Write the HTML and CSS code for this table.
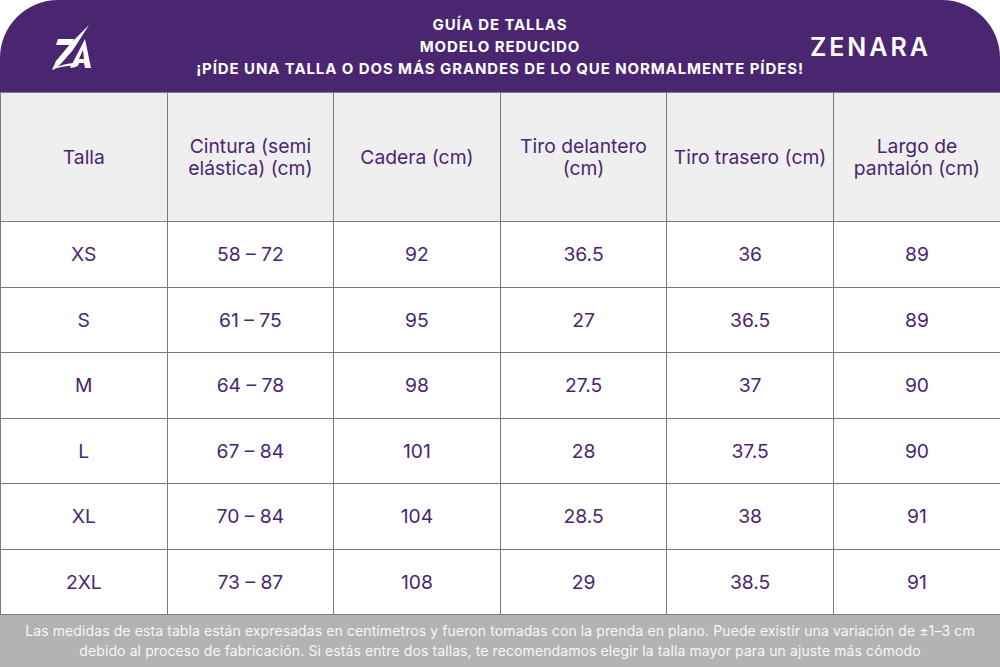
FILE: index.html
```html
<!DOCTYPE html>
<html lang="es">
<head>
<meta charset="utf-8">
<title>Guía de tallas - Zenara</title>
<link rel="stylesheet" href="styles.css">
</head>
<body>
<div class="page">
  <header class="top">
    <div class="logo">
      <svg width="44" height="48" viewBox="48 20 44 48" aria-label="ZA">
        <polygon fill="#fff" points="58,36 74,36 71,42 56,42"/>
        <polygon fill="#fff" points="89,22 73,47 58,64 52,67 56,58 71,40"/>
        <path fill="#fff" d="M52,67 Q64,59 79,60 L78,63 Q64,62 52,67 Z"/>
        <path fill="#fff" fill-rule="evenodd" d="M85,36 L91,65 L85,65 L84,60 L78,60 L76,64 L70,65 Z M83,47 L84,56 L79,56 Z"/>
      </svg>
    </div>
    <div class="title">
      <div>GUÍA DE TALLAS</div>
      <div>MODELO REDUCIDO</div>
      <div>¡PÍDE UNA TALLA O DOS MÁS GRANDES DE LO QUE NORMALMENTE PÍDES!</div>
    </div>
    <div class="brand">ZENARA</div>
  </header>
  <table class="sizes">
    <thead>
      <tr>
        <th>Talla</th>
        <th>Cintura (semi<br>elástica) (cm)</th>
        <th>Cadera (cm)</th>
        <th>Tiro delantero<br>(cm)</th>
        <th>Tiro trasero (cm)</th>
        <th>Largo de<br>pantalón (cm)</th>
      </tr>
    </thead>
    <tbody>
      <tr><td>XS</td><td>58 – 72</td><td>92</td><td>36.5</td><td>36</td><td>89</td></tr>
      <tr><td>S</td><td>61 – 75</td><td>95</td><td>27</td><td>36.5</td><td>89</td></tr>
      <tr><td>M</td><td>64 – 78</td><td>98</td><td>27.5</td><td>37</td><td>90</td></tr>
      <tr><td>L</td><td>67 – 84</td><td>101</td><td>28</td><td>37.5</td><td>90</td></tr>
      <tr><td>XL</td><td>70 – 84</td><td>104</td><td>28.5</td><td>38</td><td>91</td></tr>
      <tr><td>2XL</td><td>73 – 87</td><td>108</td><td>29</td><td>38.5</td><td>91</td></tr>
    </tbody>
  </table>
  <footer class="note">
    Las medidas de esta tabla están expresadas en centímetros y fueron tomadas con la prenda en plano. Puede existir una variación de ±1–3 cm<br>
    debido al proceso de fabricación. Si estás entre dos tallas, te recomendamos elegir la talla mayor para un ajuste más cómodo
  </footer>
</div>
</body>
</html>
```
FILE: styles.css
```css
* { box-sizing: border-box; }
html, body { margin: 0; padding: 0; background: #fff; }
body { font-family: "Inter", "Noto Sans", sans-serif; }
.page { width: 1000px; height: 667px; display: flex; flex-direction: column; overflow: hidden; }

.top {
  height: 92px;
  background: #4b2670;
  border-radius: 58px 58px 0 0;
  display: grid;
  grid-template-columns: 1fr auto 1fr;
  align-items: center;
  color: #fff;
}
.logo { padding-left: 48px; display: flex; align-items: center; padding-top: 2px; }
.logo svg { display: block; }
.title {
  text-align: center;
  font-weight: 700;
  font-size: 15px;
  line-height: 22px;
  letter-spacing: 0.9px;
  padding-top: 2px;
}
.brand {
  justify-self: end;
  padding-right: 69px;
  font-size: 25px;
  font-weight: 600;
  letter-spacing: 3px;
  padding-top: 1px;
}

.sizes {
  width: 1000px;
  border-collapse: collapse;
  table-layout: fixed;
  color: #4b2670;
}
.sizes th, .sizes td {
  border: 1px solid #7a7a7a;
  text-align: center;
  vertical-align: middle;
  padding: 0;
  font-weight: 400;
}
.sizes th {
  background: #efefef;
  height: 129px;
  font-size: 19.3px;
  line-height: 22px;
}
.sizes td {
  height: 65.5px;
  font-size: 19.3px;
  background: #fff;
}
.sizes tr > :first-child { border-left: 1px solid #7a7a7a; }
.sizes tr > :last-child { border-right: none; }

.note {
  flex: 1;
  background: #b3b3b3;
  color: #f7f7f7;
  text-align: center;
  font-size: 14px;
  line-height: 20px;
  padding-top: 6px;
  letter-spacing: 0.1px;
}
```
